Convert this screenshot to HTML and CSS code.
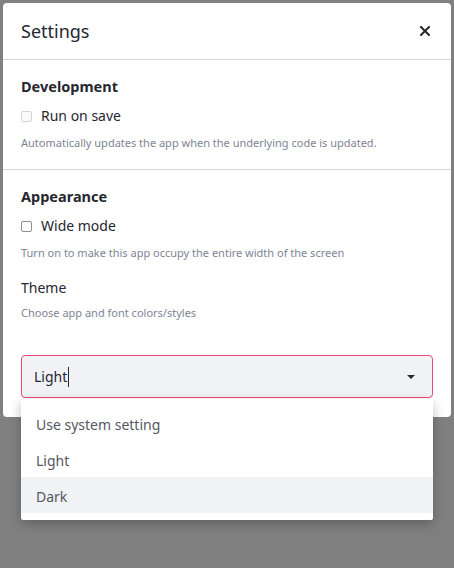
FILE: index.html
```html
<!DOCTYPE html>
<html>
<head>
<meta charset="utf-8">
<link rel="stylesheet" href="styles.css">
</head>
<body>
<div class="dialog">
  <div class="header">
    <span class="title">Settings</span>
    <svg class="close" width="10" height="10" viewBox="0 0 10 10"><path d="M1 1L9 9M9 1L1 9" stroke="#262730" stroke-width="2" stroke-linecap="square"/></svg>
  </div>
  <div class="section">
    <div class="heading">Development</div>
    <label class="check disabled"><span class="box"></span><span>Run on save</span></label>
    <div class="desc">Automatically updates the app when the underlying code is updated.</div>
  </div>
  <div class="section last">
    <div class="heading">Appearance</div>
    <label class="check"><span class="box"></span><span>Wide mode</span></label>
    <div class="desc">Turn on to make this app occupy the entire width of the screen</div>
    <div class="label">Theme</div>
    <div class="desc sub">Choose app and font colors/styles</div>
    <div class="select-wrap">
      <div class="select">
        <span class="value">Light</span><span class="caret"></span>
        <svg class="arrow" width="8" height="4" viewBox="0 0 8 4"><path d="M0 0H8L4 4Z" fill="#262730"/></svg>
      </div>
      <ul class="menu">
        <li>Use system setting</li>
        <li>Light</li>
        <li class="active">Dark</li>
      </ul>
    </div>
  </div>
</div>
</body>
</html>
```
FILE: styles.css
```css
html, body { margin: 0; padding: 0; }
body {
  background: #808080;
  width: 454px;
  height: 568px;
  overflow: hidden;
  font-family: "Noto Sans", sans-serif;
  color: #262730;
  padding: 3px 3px 0 3px;
  box-sizing: border-box;
}
.dialog {
  background: #fff;
  border-radius: 4px;
  width: 448px;
}
.header {
  height: 56px;
  border-bottom: 1px solid #d6d6d9;
  display: flex;
  align-items: center;
  justify-content: space-between;
  padding: 0 21px 0 18px;
}
.title { font-size: 18px; line-height: 24px; }
.close { display: block; }
.section {
  padding: 16px 18px 18px 18px;
  border-bottom: 1px solid #d6d6d9;
}
.section.last { border-bottom: none; padding-bottom: 19px; }
.heading { font-size: 14.5px; font-weight: 700; line-height: 20px; }
.check {
  display: flex;
  align-items: center;
  gap: 9px;
  font-size: 14px;
  line-height: 22px;
  margin-top: 9px;
}
.box {
  width: 11px;
  height: 11px;
  border: 1px solid #8c8c92;
  border-radius: 2px;
  box-sizing: border-box;
}
.disabled .box { border-color: #d3d3d6; background: #fafafa; }
.desc {
  font-size: 11px;
  line-height: 16px;
  color: #808495;
  margin-top: 8px;
}
.label { font-size: 14px; line-height: 20px; margin-top: 17px; }
.desc.sub { margin-top: 7px; }
.select-wrap { position: relative; margin-top: 34px; }
.select {
  height: 43px;
  box-sizing: border-box;
  border: 1px solid #f24b73;
  border-radius: 4px;
  background: #f0f2f6;
  display: flex;
  align-items: center;
  padding: 0 17px 0 12px;
  font-size: 14px;
}
.caret {
  width: 1px;
  height: 20px;
  background: #262730;
  margin-left: 1px;
}
.arrow { margin-left: auto; display: block; }
.menu {
  position: absolute;
  left: 0;
  right: 0;
  top: 44px;
  margin: 0;
  padding: 6px 0 7px 0;
  list-style: none;
  background: #fff;
  border-radius: 2px;
  box-shadow: 0 4px 12px rgba(0,0,0,0.25);
}
.menu li {
  height: 33px;
  line-height: 33px;
  padding: 3px 0 0 15px;
  font-size: 14px;
  color: #55575f;
}
.menu li.active { background: #f0f2f6; }
```
